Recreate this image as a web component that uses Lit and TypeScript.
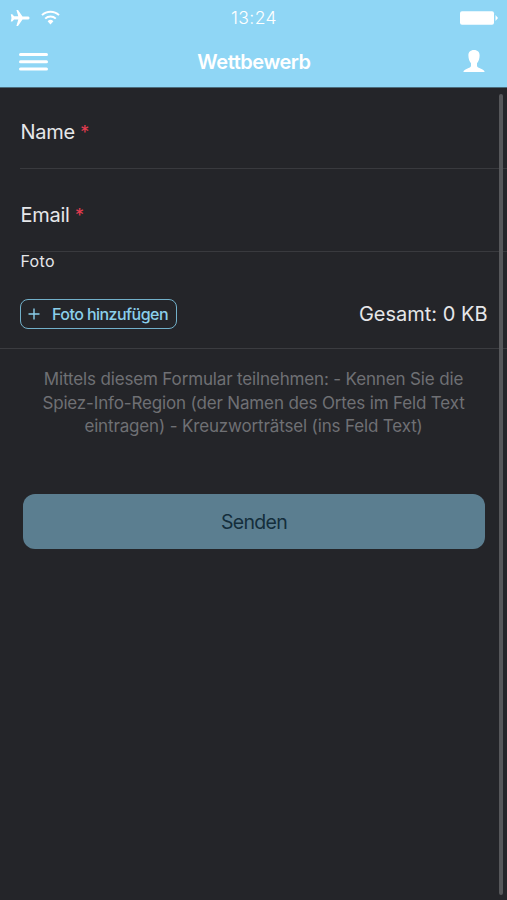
import { LitElement, html, css } from "lit";
import { customElement } from "lit/decorators.js";

@customElement("app-root")
export class AppRoot extends LitElement {
  static styles = css`
    :host {
      display: block;
      position: relative;
      width: 507px;
      height: 900px;
      overflow: hidden;
      background: #242529;
      color: #e6e7e9;
      font-family: Inter, "Liberation Sans", sans-serif;
      box-sizing: border-box;
    }
    * { box-sizing: border-box; }
    svg { display: block; }
    header {
      height: 88px;
      background: #8fd6f5;
      border-bottom: 1px solid #4b6c7c;
      color: #fff;
    }
    .status, .nav {
      display: grid;
      grid-template-columns: 1fr auto 1fr;
      align-items: center;
    }
    .status { height: 34px; padding: 0 9px 0 10px; }
    .nav { height: 54px; padding: 0 22px 0 19px; }
    .left { display: flex; gap: 11px; align-items: center; }
    .right { justify-self: end; }
    .time { font-size: 17.5px; line-height: 34px; letter-spacing: 0.4px; font-weight: 300; padding-top: 1px; }
    .title { font-size: 20px; line-height: 54px; font-weight: 600; letter-spacing: -0.45px; padding: 1px 0 0 4px; }
    .field {
      margin-left: 20px;
      border-bottom: 1px solid #393a3e;
      font-size: 20px;
      letter-spacing: -0.25px;
      line-height: 24px;
      padding: 32px 0 0 0.5px;
    }
    .name { height: 81px; }
    .email { height: 83px; padding-top: 34px; }
    .label { display: inline-block; }
    .star { color: #e63c50; display: inline-block; font-size: 18px; line-height: 20px; }
    .photo { height: 97px; border-bottom: 1px solid #3b3c40; padding: 0 19.5px 0 20px; }
    .caption { font-size: 16px; line-height: 18px; letter-spacing: 0.3px; height: 20px; padding-left: 0.5px; }
    .row { display: flex; justify-content: space-between; align-items: center; margin-top: 27px; }
    .add {
      display: flex;
      align-items: center;
      width: 157px;
      height: 30px;
      border: 1.5px solid #72b0c9;
      border-radius: 8px;
      padding: 0 0 0 7px;
      gap: 12px;
      background: none;
      color: #8bcfeb;
      font: 500 16px/26px Inter, sans-serif;
      letter-spacing: -0.55px;
      white-space: nowrap;
    }
    .total { font-size: 20px; line-height: 28px; white-space: nowrap; }
    .hint {
      margin: 19px 0 0;
      text-align: center;
      color: #6f7074;
      font-size: 17px;
      letter-spacing: -0.15px;
      line-height: 23.7px;
    }
    .line { display: block; }
    .send {
      display: block;
      width: 462px;
      height: 55px;
      margin: 55px 0 0 23px;
      border: 0;
      border-radius: 12px;
      background: #5b7e90;
      color: #142e3c;
      font: 400 19.5px/53px Inter, sans-serif;
      letter-spacing: -0.7px;
      padding: 2px 0 0;
    }
    .scroll {
      position: absolute;
      right: 4px;
      top: 94px;
      width: 4px;
      height: 801px;
      border-radius: 2px;
      background: #56575a;
    }
  `;

  render() {
    return html`
      <header>
        <div class="status">
          <div class="left">
            <svg width="20" height="18" viewBox="0 0 20 18" fill="#fff">
              <path d="M19.600 8.900c0-.9-.8-1.500-1.900-1.500H12.500L8 .9H6.400l1.900 6.300H4.100L2.300 5.200H.8l.7 3.700-.7 3.700h1.500l1.800-2.100h4.200L6.400 16.900H8l4.500-6.500h5.200c1.100 0 1.900-.6 1.900-1.500z"/>
            </svg>
            <svg width="19" height="16" viewBox="0 0 19 16" fill="none" stroke="#fff" stroke-width="2">
              <path d="M1 5.100a12.200 12.200 0 0 1 17 0M4.200 8.600a7.600 7.600 0 0 1 10.600 0"/>
              <path d="M6.600 11.200a4.200 4.200 0 0 1 5.800 0L9.500 14.500z" fill="#fff" stroke="none"/>
            </svg>
          </div>
          <div class="time">13:24</div>
          <svg class="right" width="38" height="14" viewBox="0 0 38 14" fill="#fff">
            <rect x="0" y="0.300" width="34" height="13.400" rx="2"/>
            <path d="M35.500 4v6l2.500-3z"/>
          </svg>
        </div>
        <div class="nav">
          <svg width="29" height="18" viewBox="0 0 29 18" fill="#fff">
            <rect y="0" width="29" height="3" rx="1.500"/>
            <rect y="7.200" width="29" height="3" rx="1.500"/>
            <rect y="14.400" width="29" height="3" rx="1.500"/>
          </svg>
          <div class="title">Wettbewerb</div>
          <svg class="right" width="22" height="23" viewBox="0 0 22 23" fill="#fff">
            <path d="M11 0c3.700 0 5.700 2.200 5.600 5.600 0 3.100-1.100 6-2.600 7.700v2.500c0 1.800 1.700 2 4 2.900 2.300.8 3.500 1.800 3.600 3.400H.4c.1-1.600 1.300-2.600 3.600-3.400 2.300-.9 4-1.100 4-2.900v-2.500C6.500 11.600 5.400 8.700 5.400 5.600 5.300 2.200 7.300 0 11 0z"/>
          </svg>
        </div>
      </header>
      <div class="field name"><span class="label">Name</span> <span class="star">*</span></div>
      <div class="field email"><span class="label">Email</span> <span class="star">*</span></div>
      <div class="photo">
        <div class="caption"><span class="label">Foto</span></div>
        <div class="row">
          <button class="add">
            <svg width="12" height="12" viewBox="0 0 12 12" stroke="#8bcfeb" stroke-width="1.400"><path d="M6 .5v11M.5 6h11"/></svg>
            <span class="add-text">Foto hinzufügen</span>
          </button>
          <div class="total">Gesamt: 0 KB</div>
        </div>
      </div>
      <p class="hint">
        <span class="line">Mittels diesem Formular teilnehmen: - Kennen Sie die</span>
        <span class="line">Spiez-Info-Region (der Namen des Ortes im Feld Text</span>
        <span class="line">eintragen) - Kreuzworträtsel (ins Feld Text)</span>
      </p>
      <button class="send">Senden</button>
      <div class="scroll"></div>
    `;
  }
}
